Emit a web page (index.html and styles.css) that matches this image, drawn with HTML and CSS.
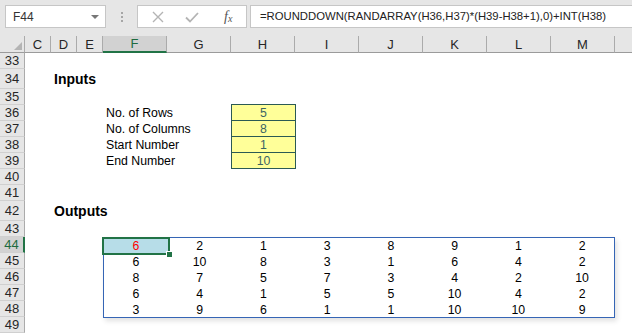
FILE: index.html
```html
<!DOCTYPE html>
<html lang="en">
<head>
  <meta charset="UTF-8">
  <title>RANDARRAY sheet</title>
  <link rel="stylesheet" href="styles.css">
</head>
<body>
  <div class="toolbar">
    <div class="namebox">
      <span>F44</span>
      <span class="caret"></span>
    </div>
    <div class="grip"><i></i><i></i><i></i></div>
    <div class="fbuttons">
      <svg width="14" height="14" viewBox="0 0 14 14"><path d="M2 2 L12 12 M12 2 L2 12" stroke="#b4b4b4" stroke-width="1.4" fill="none"/></svg>
      <svg width="16" height="14" viewBox="0 0 16 14"><path d="M2 7.5 L6 11.5 L14 3" stroke="#b4b4b4" stroke-width="1.8" fill="none"/></svg>
      <span class="fx">f<sub>x</sub></span>
    </div>
    <div class="formula">=ROUNDDOWN(RANDARRAY(H36,H37)*(H39-H38+1),0)+INT(H38)</div>
  </div>

  <div class="sheet">
    <div class="corner"></div>
    <div class="colhdr">C</div>
    <div class="colhdr">D</div>
    <div class="colhdr">E</div>
    <div class="colhdr active">F</div>
    <div class="colhdr">G</div>
    <div class="colhdr">H</div>
    <div class="colhdr">I</div>
    <div class="colhdr">J</div>
    <div class="colhdr">K</div>
    <div class="colhdr">L</div>
    <div class="colhdr">M</div>
    <div class="colhdr last"></div>

    <div class="rowhdr">33</div>
    <div class="rowhdr">34</div>
    <div class="rowhdr">35</div>
    <div class="rowhdr">36</div>
    <div class="rowhdr">37</div>
    <div class="rowhdr">38</div>
    <div class="rowhdr">39</div>
    <div class="rowhdr">40</div>
    <div class="rowhdr">41</div>
    <div class="rowhdr">42</div>
    <div class="rowhdr">43</div>
    <div class="rowhdr active">44</div>
    <div class="rowhdr">45</div>
    <div class="rowhdr">46</div>
    <div class="rowhdr">47</div>
    <div class="rowhdr">48</div>
    <div class="rowhdr">49</div>

    <div class="heading inputs-title">Inputs</div>

    <div class="labels">
      <div>No. of Rows</div>
      <div>No. of Columns</div>
      <div>Start Number</div>
      <div>End Number</div>
    </div>

    <div class="inputbox">
      <div>5</div>
      <div>8</div>
      <div>1</div>
      <div>10</div>
    </div>

    <div class="heading outputs-title">Outputs</div>

    <div class="spill">
      <div class="sel">6<span class="handle"></span></div><div>2</div><div>1</div><div>3</div><div>8</div><div>9</div><div>1</div><div>2</div>
      <div>6</div><div>10</div><div>8</div><div>3</div><div>1</div><div>6</div><div>4</div><div>2</div>
      <div>8</div><div>7</div><div>5</div><div>7</div><div>3</div><div>4</div><div>2</div><div>10</div>
      <div>6</div><div>4</div><div>1</div><div>5</div><div>5</div><div>10</div><div>4</div><div>2</div>
      <div>3</div><div>9</div><div>6</div><div>1</div><div>1</div><div>10</div><div>10</div><div>9</div>
    </div>
  </div>
</body>
</html>
```

FILE: styles.css
```css
/* Page */
body, html {
  margin: 0;
  padding: 0;
  width: 632px;
  height: 333px;
  overflow: hidden;
  background: #fff;
  font-family: 'Liberation Sans', Arial, sans-serif;
  color: #000;
}

/* Formula bar */
.toolbar {
  height: 36px;
  box-sizing: border-box;
  padding: 5px 0 0 5px;
  background: #e6e6e6;
  display: flex;
  align-items: flex-start;
}

.namebox, .fbuttons, .formula {
  height: 23px;
  box-sizing: border-box;
  background: #fff;
  border: 1px solid #c6c6c6;
}

.namebox {
  width: 101px;
  display: flex;
  align-items: center;
  justify-content: space-between;
  padding: 0 6px 0 7px;
  font-size: 12px;
  color: #333;
}

.caret {
  width: 0;
  height: 0;
  border-left: 4px solid transparent;
  border-right: 4px solid transparent;
  border-top: 4px solid #777;
}

.grip {
  width: 31px;
  height: 23px;
  display: flex;
  flex-direction: column;
  align-items: center;
  justify-content: center;
  gap: 2px;
}

.grip i {
  width: 2px;
  height: 2px;
  background: #a6a6a6;
}

.fbuttons {
  width: 110px;
  display: flex;
  align-items: center;
  padding: 0 0 0 13px;
  gap: 19px;
}

.fx {
  margin-left: 5px;
  font-family: 'Liberation Serif', serif;
  font-style: italic;
  font-size: 14px;
  color: #555;
}

.fx sub {
  font-size: 10px;
  vertical-align: -1px;
}

.formula {
  flex: 1;
  margin-left: 3px;
  border-right: none;
  padding: 0 0 0 9px;
  font-size: 11.3px;
  line-height: 21px;
  color: #222;
  white-space: nowrap;
}

/* Sheet grid */
.sheet {
  display: grid;
  grid-template-columns: 25px 26px 26px 26px repeat(8, 64px) 1fr;
  grid-template-rows: 17px 16px 20px repeat(7, 16px) 20px repeat(7, 16px);
}

.corner {
  grid-column: 1;
  grid-row: 1;
  background: #e6e6e6;
  border-right: 1px solid #ababab;
  border-bottom: 1px solid #9b9b9b;
  position: relative;
}

.corner::after {
  content: '';
  position: absolute;
  right: 2px;
  bottom: 2px;
  border-left: 8px solid transparent;
  border-bottom: 8px solid #b4b4b4;
}

.colhdr {
  grid-row: 1;
  background: #e6e6e6;
  border-right: 1px solid #ababab;
  border-bottom: 1px solid #9b9b9b;
  font-size: 13px;
  line-height: 17px;
  text-align: center;
  color: #262626;
}

.colhdr.active {
  background: #d2d2d2;
  color: #1e6b40;
  border-bottom: 2px solid #217346;
  line-height: 16px;
}

.colhdr.last {
  border-right: none;
}

.rowhdr {
  grid-column: 1;
  background: #e6e6e6;
  border-right: 1px solid #ababab;
  border-bottom: 1px solid #d0d0d0;
  box-sizing: border-box;
  font-size: 13px;
  color: #262626;
  display: flex;
  align-items: center;
  justify-content: center;
}

.rowhdr.active {
  background: #d2d2d2;
  color: #1e6b40;
  border-right: 2px solid #217346;
}

.heading {
  grid-column: 3 / span 4;
  padding-left: 3px;
  font-size: 14px;
  font-weight: bold;
  line-height: 20px;
}

.inputs-title { grid-row: 3; }
.outputs-title { grid-row: 11; }

/* Inputs */
.labels {
  grid-column: 5 / span 2;
  grid-row: 5 / span 4;
  display: flex;
  flex-direction: column;
  font-size: 12.3px;
}

.labels div {
  height: 16px;
  line-height: 16px;
  padding-left: 3px;
}

.inputbox {
  grid-column: 7;
  grid-row: 5 / span 4;
  margin-top: -1px;
  width: 65px;
  box-sizing: border-box;
  display: flex;
  flex-direction: column;
  border: 1px solid #2b5a54;
  border-bottom: none;
}

.inputbox div {
  height: 16px;
  box-sizing: border-box;
  border-bottom: 1px solid #2b5a54;
  background: #ffff99;
  text-align: center;
  font-size: 12.3px;
  line-height: 16px;
  color: #3c6464;
}

/* Outputs (spill range) */
.spill {
  grid-column: 5 / span 8;
  grid-row: 13 / span 5;
  height: 81px;
  box-sizing: border-box;
  display: grid;
  grid-template-columns: repeat(8, 1fr);
  grid-auto-rows: 16px;
  border: 1px solid #3565b5;
  box-shadow: 2px 3px 5px rgba(0, 0, 0, 0.12);
}

.spill div {
  text-align: center;
  font-size: 12.3px;
  line-height: 16px;
}

.spill .sel {
  position: relative;
  color: #ff0000;
  background: #b7dde8;
  outline: 2px solid #217346;
  outline-offset: -1px;
  margin: 0 -1px;
}

.handle {
  position: absolute;
  right: -4px;
  bottom: -4px;
  width: 5px;
  height: 5px;
  background: #217346;
  border: 1px solid #fff;
}
```
